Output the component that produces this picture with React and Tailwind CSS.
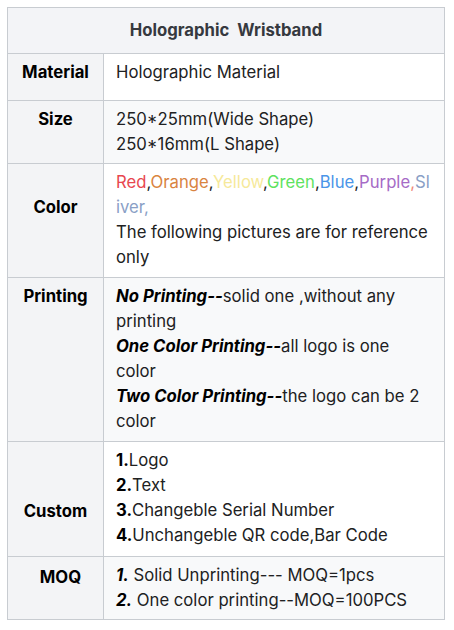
const cell = "border border-[#c8ccd1]"
const label = cell + " bg-[#f3f4f6] align-top text-center font-bold text-[#000000] px-2"
const content = cell + " align-top px-[12px] pt-[6px]"

const App = () => {
    return (
        <div className="bg-white min-h-screen p-[7px]" style={{ fontFamily: "Inter, 'Noto Sans', sans-serif" }}>
            <table className="w-[438px] border-collapse text-[16.7px] leading-[25px] text-[#202122] table-fixed">
                <colgroup>
                    <col className="w-[96px]" />
                    <col />
                </colgroup>
                <tbody>
                    <tr className="h-[46px]">
                        <th colSpan={2} className={cell + " bg-[#f3f4f7] text-center font-bold text-[#36393f] whitespace-pre"}>
                            Holographic  Wristband
                        </th>
                    </tr>
                    <tr className="h-[47px]">
                        <th className={label + " pt-[6px]"}>Material</th>
                        <td className={content + " pb-[6px] bg-white"}>Holographic Material</td>
                    </tr>
                    <tr>
                        <th className={label + " pt-[6px]"}>Size</th>
                        <td className={content + " pb-[6px] bg-[#f8f9fa]"}>
                            250*25mm(Wide Shape)<br />
                            250*16mm(L Shape)
                        </td>
                    </tr>
                    <tr>
                        <th className={label + " pt-[31px]"}>Color</th>
                        <td className={content + " pb-[7px] bg-white"}>
                            <span className="text-[#e8474f]">Red</span>,
                            <span className="text-[#d9843f]">Orange</span>,
                            <span className="text-[#f6e99a]">Yellow</span>,
                            <span className="text-[#5ee25e]">Green</span>,
                            <span className="text-[#4a95e8]">Blue</span>,
                            <span className="text-[#a66bc6]">Purple</span>
                            <span className="text-[#f08a7a]">,</span>
                            <span className="text-[#8a9fc6]">Sl<br />iver,</span>
                            <br />
                            The following pictures are for reference only
                        </td>
                    </tr>
                    <tr>
                        <th className={label + " pt-[6px]"}>Printing</th>
                        <td className={content + " pb-[7px] bg-[#f8f9fa]"}>
                            <b className="italic text-black">No Printing--</b>solid one ,without any printing<br />
                            <b className="italic text-black">One Color Printing--</b>all logo is one color<br />
                            <b className="italic text-black">Two Color Printing--</b>the logo can be 2 color
                        </td>
                    </tr>
                    <tr>
                        <th className={label + " pt-[57px]"}>Custom</th>
                        <td className={content + " pb-[8px] bg-white"}>
                            <b className="text-black">1.</b>Logo<br />
                            <b className="text-black">2.</b>Text<br />
                            <b className="text-black">3.</b>Changeble Serial Number<br />
                            <b className="text-black">4.</b>Unchangeble QR code,Bar Code
                        </td>
                    </tr>
                    <tr>
                        <th className={label + " pt-[8px] pl-[18px]"}>MOQ</th>
                        <td className={content + " pb-[6px] bg-[#f8f9fa]"}>
                            <b className="italic text-black">1.</b> Solid Unprinting--- MOQ=1pcs<br />
                            <b className="italic text-black">2.</b> One color printing--MOQ=100PCS
                        </td>
                    </tr>
                </tbody>
            </table>
        </div>
    )
}

export default App
